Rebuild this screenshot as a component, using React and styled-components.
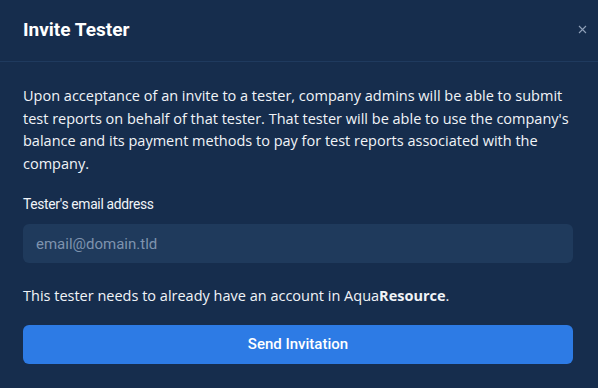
import styled, { createGlobalStyle } from "styled-components"

const Global = createGlobalStyle`
  html, body {
    margin: 0;
    padding: 0;
    background: #162d4d;
  }
  * { box-sizing: border-box; }
`

const Modal = styled.div`
  width: 598px;
  height: 388px;
  background: #162d4d;
  display: flex;
  flex-direction: column;
  color: #f1f4f8;
`

const Header = styled.div`
  height: 62px;
  display: flex;
  align-items: center;
  justify-content: space-between;
  padding: 0 9px 2px 23px;
  border-bottom: 1px solid #1f3a5e;
`

const Title = styled.h2`
  margin: 0;
  font-family: Roboto, "Liberation Sans", sans-serif;
  font-weight: 700;
  font-size: 19px;
  color: #ffffff;
`

const Close = styled.button`
  border: none;
  background: none;
  padding: 0;
  width: 14px;
  height: 14px;
  display: flex;
  align-items: center;
  justify-content: center;
  cursor: pointer;
`

const Body = styled.div`
  padding: 23px 25px 0 23px;
  display: flex;
  flex-direction: column;
`

const Text = styled.p`
  margin: 0;
  font-family: "Open Sans", sans-serif;
  font-size: 14.5px;
  line-height: 22.5px;
  color: #f1f4f8;
  b { font-weight: 700; }
`

const Label = styled.label`
  margin-top: 19px;
  font-family: Roboto, "Liberation Sans", sans-serif;
  font-size: 13.8px;
  letter-spacing: -0.3px;
  line-height: 20px;
  color: #f1f4f8;
`

const Input = styled.input`
  margin-top: 10px;
  height: 39px;
  width: 100%;
  border: none;
  border-radius: 6px;
  background: #1f3a5c;
  padding: 0 13px;
  font-family: Roboto, "Liberation Sans", sans-serif;
  font-size: 15px;
  color: #fff;
  outline: none;
  &::placeholder { color: #7e93ae; }
`

const Note = styled(Text)`
  margin-top: 22px;
`

const Button = styled.button`
  margin-top: 17px;
  height: 39px;
  width: 100%;
  border: none;
  border-radius: 6px;
  background: #2d7be5;
  color: #fff;
  font-family: Roboto, "Liberation Sans", sans-serif;
  font-weight: 500;
  font-size: 15px;
  cursor: pointer;
`

function App() {
  return (
    <>
      <Global />
      <Modal>
        <Header>
          <Title>Invite Tester</Title>
          <Close aria-label="close">
            <svg width="9" height="9" viewBox="0 0 9 9">
              <path d="M1 1L8 8M8 1L1 8" stroke="#8fa0b8" strokeWidth="1.1" />
            </svg>
          </Close>
        </Header>
        <Body>
          <Text>
            Upon acceptance of an invite to a tester, company admins will be able to submit
            test reports on behalf of that tester. That tester will be able to use the company's
            balance and its payment methods to pay for test reports associated with the
            company.
          </Text>
          <Label>Tester's email address</Label>
          <Input placeholder="email@domain.tld" />
          <Note>
            This tester needs to already have an account in Aqua<b>Resource</b>.
          </Note>
          <Button>Send Invitation</Button>
        </Body>
      </Modal>
    </>
  )
}

export default App
